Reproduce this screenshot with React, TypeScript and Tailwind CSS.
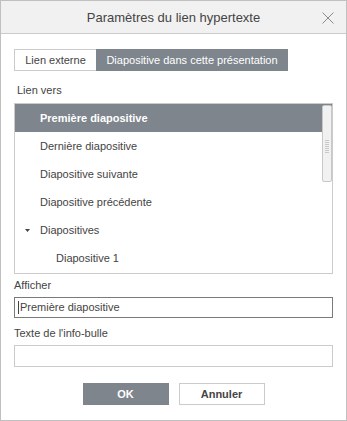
import React from "react";

const rows = [
  { label: "Première diapositive", indent: 25, selected: true },
  { label: "Dernière diapositive", indent: 25 },
  { label: "Diapositive suivante", indent: 25 },
  { label: "Diapositive précédente", indent: 25 },
  { label: "Diapositives", indent: 25, caret: true },
  { label: "Diapositive 1", indent: 41 },
];

export default function App() {
  return (
    <div
      className="w-[347px] h-[421px] border border-[#c0c0c0] bg-white flex flex-col text-[#444] text-[11px]"
      style={{ fontFamily: '"Liberation Sans", Arial, sans-serif' }}
    >
      <div className="h-[33px] shrink-0 border-b border-[#cbcbcb] bg-[#f1f1f1] relative flex items-center justify-center">
        <span className="text-[13px] text-[#444] leading-none pt-[1px]">Paramètres du lien hypertexte</span>
        <svg className="absolute right-[12px] top-[11px]" width="12" height="12" viewBox="0 0 12 12">
          <path d="M0.5 0.5 L11.5 11.5 M11.5 0.5 L0.5 11.5" stroke="#8c8c8c" strokeWidth="1" fill="none" />
        </svg>
      </div>

      <div className="flex flex-col px-[13px]">
        <div className="mt-[15px] flex h-[22px]">
          <div className="w-[82px] border border-[#cbcbcb] border-r-0 flex items-center justify-center text-[#444] text-[11px]">
            Lien externe
          </div>
          <div className="w-[192px] bg-[#7e858c] text-white flex items-center justify-center text-[11px]">
            Diapositive dans cette présentation
          </div>
        </div>

        <div className="mt-[13px] pl-[3px] leading-[13px]">Lien vers</div>

        <div className="mt-[6px] h-[171px] border border-[#cbcbcb] relative overflow-hidden">
          {rows.map((r) => (
            <div
              key={r.label}
              className={
                "h-[28px] flex items-center relative " +
                (r.selected ? "bg-[#7e858c] text-white font-bold" : "text-[#444]")
              }
              style={{ paddingLeft: r.indent }}
            >
              {r.caret && (
                <svg className="absolute left-[10px] top-[13px]" width="5" height="3" viewBox="0 0 5 3">
                  <path d="M0 0 L5 0 L2.5 3 Z" fill="#444" />
                </svg>
              )}
              {r.label}
            </div>
          ))}
          <div className="absolute right-0 top-[1px] w-[10px] h-[77px] bg-[#f1f1f1] border border-[#c8c8c8] rounded-[2px] flex flex-col items-center justify-center gap-[1px] pt-[5px]">
            {[0, 1, 2, 3, 4, 5, 6].map((i) => (
              <div key={i} className="w-[4px] h-[1px] bg-[#c8c8c8]" />
            ))}
          </div>
        </div>

        <div className="mt-[5px] leading-[13px]">Afficher</div>
        <div className="mt-[5px] h-[21px] border border-[#7a7a7a] flex items-center pl-[3px]">
          <span className="w-[1px] h-[13px] bg-[#444] mr-[1px]" />
          Première diapositive
        </div>

        <div className="mt-[9px] leading-[13px]">Texte de l'info-bulle</div>
        <div className="mt-[5px] h-[22px] border border-[#cbcbcb]" />

        <div className="mt-[16px] flex justify-center gap-[10px]">
          <div className="w-[86px] h-[22px] bg-[#7e858c] text-white font-bold flex items-center justify-center">
            OK
          </div>
          <div className="w-[86px] h-[22px] border border-[#cbcbcb] text-[#444] font-bold flex items-center justify-center">
            Annuler
          </div>
        </div>
      </div>
    </div>
  );
}
